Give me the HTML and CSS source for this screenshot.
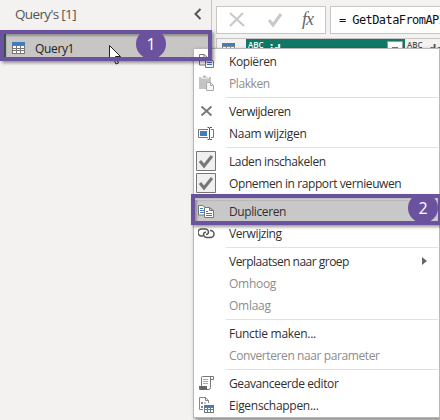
FILE: index.html
```html
<!DOCTYPE html>
<html lang="nl">
<head>
<meta charset="utf-8">
<title>Query's</title>
<link rel="stylesheet" href="styles.css">
</head>
<body>
<div class="app">
  <aside class="pane">
    <header class="pane-head"><span>Query's [1]</span>
      <svg class="chevron" width="8" height="12" viewBox="0 0 8 12"><path d="M6.5 1L1.5 6l5 5"/></svg>
    </header>
    <div class="query">
      <svg width="13" height="12" viewBox="0 0 13 12"><path fill="#777" d="M0 0h13v12H0z"/><path fill="#3f7dbd" d="M0 0h13v3H0z"/><path fill="#fff" d="M1 4h3v2H1zM5 4h3v2H5zM9 4h3v2H9zM1 7h3v1H1zM5 7h3v1H5zM9 7h3v1H9zM1 9h3v2H1zM5 9h3v2H5zM9 9h3v2H9z"/></svg>
      <span>Query1</span>
    </div>
  </aside>
  <main class="work">
    <div class="formula">
      <div class="tools">
        <svg width="108" height="26" viewBox="0 0 108 26" fill="none"><path d="M13 6l14 13M26 6L13 19" stroke="#c8c8c8" stroke-width="2"/><path d="M52 13l4 5 8-11" stroke="#c8c8c8" stroke-width="3"/></svg>
        <i class="fx">fx</i>
      </div>
      <div class="code">= GetDataFromAPI</div>
    </div>
    <div class="grid">
      <div class="corner"><svg width="13" height="12" viewBox="0 0 13 12"><path fill="#888" d="M0 0h13v12H0z"/><path fill="#3f7dbd" d="M0 0h13v3H0z"/><path fill="#fff" d="M1 4h3v3H1zM5 4h3v3H5zM9 4h3v3H9z"/></svg></div>
      <div class="col active"><small>ABC</small><b>id</b><span class="drop"></span></div>
      <div class="col"><small>ABC</small><b>da</b></div>
    </div>
  </main>
</div>

<nav class="menu">
  <div class="item"><svg viewBox="0 0 18 18" class="ico"><path d="M8 13H1.500V2.500H6L9.500 5.500V7M6 2.500V5.500H9" stroke="#777"/><path d="M7.500 6.500h5l3 3v6h-8z" fill="#fff" stroke="#777"/><path d="M9 10.500h5M9 12.500h5" stroke="#3f7dbd"/></svg><span>Kopiëren</span></div>
  <div class="item off"><svg viewBox="0 0 18 18" class="ico"><path d="M1 3h12v5H8v7H1z" fill="#c4c4c4"/><path d="M3.500 4V2.500H5V1h3v1.500h2.500V4z" fill="#aaa" stroke="#fff"/><path d="M8.500 8.500h4l3 3v5h-7zM12.500 8.500v3h3" fill="#f5f5f5" stroke="#aaa"/></svg><span>Plakken</span></div>
  <hr>
  <div class="item"><svg viewBox="0 0 18 18" class="ico"><path d="M3.500 4.500l10 9M13.500 4.500l-10 9" stroke="#777" stroke-width="1.800"/></svg><span class="tight">Verwijderen</span></div>
  <div class="item"><svg viewBox="0 0 18 18" class="ico"><path d="M10 5.500H.500v8H10M13 5.500h2.500v8H13" stroke="#777"/><path d="M2 7h7v5H2z" fill="#3f7dbd"/><path d="M9.500 3.500H11l.500 1 .500-1h2M11.500 4v11M9.500 15.500H11l.500-1 .500 1h2" stroke="#555"/></svg><span class="loose">Naam wijzigen</span></div>
  <hr>
  <div class="item"><svg viewBox="0 0 20 20" class="check"><path d="M.500.500h19v19H.500z" fill="#f0f0f0" stroke="#777"/><path d="M4 10l4 5 8-10" stroke="#777" stroke-width="3"/></svg><span>Laden inschakelen</span></div>
  <div class="item"><svg viewBox="0 0 20 20" class="check"><path d="M.500.500h19v19H.500z" fill="#f0f0f0" stroke="#777"/><path d="M4 10l4 5 8-10" stroke="#777" stroke-width="3"/></svg><span>Opnemen in rapport vernieuwen</span></div>
  <hr>
  <div class="item hot"><svg viewBox="0 0 18 18" class="ico"><path d="M.500 3.500h4l3 2v7.500h-7z" fill="#fff" stroke="#777"/><path d="M2 6.500h3M2 8.500h4M2 10.500h4" stroke="#3f7dbd"/><path d="M6.500 5.500h5l4 3v7h-9zM11.500 5.500v3h4" fill="#fff" stroke="#777"/><path d="M8 9.500h2M8 11.500h6M8 13.500h6" stroke="#3f7dbd"/></svg><span>Dupliceren</span></div>
  <div class="item"><svg viewBox="0 0 18 18" class="ico"><path d="M5 12H3.500a3 3 0 010-7H7a3 3 0 013 4.500 3 3 0 01-2 1M12 6.500h.500a3 3 0 010 7H9a3 3 0 01-3-4.500 3 3 0 012-1" stroke="#555" stroke-width="1.500"/></svg><span>Verwijzing</span></div>
  <hr>
  <div class="item"><span class="tight">Verplaatsen naar groep</span><svg class="arrow" viewBox="0 0 5 8"><path d="M0 0l5 4-5 4z" fill="#666"/></svg></div>
  <div class="item off"><span class="loose">Omhoog</span></div>
  <div class="item off"><span class="loose">Omlaag</span></div>
  <hr>
  <div class="item"><span class="loose">Functie maken...</span></div>
  <div class="item off"><span>Converteren naar parameter</span></div>
  <hr>
  <div class="item"><svg viewBox="0 0 18 18" class="ico"><path d="M3.500 12V3.500q0-1 1-1H15.500V5.500H13M12.500 3v10.500q0 2-2 2H9" stroke="#777"/><path d="M1 12h8v3.500h2V16H2q-1 0-1-2z" fill="#666"/><path d="M5 5.500h5M5 7.500h5M5 9.500h5" stroke="#aaa"/></svg><span>Geavanceerde editor</span></div>
  <div class="item"><svg viewBox="0 0 18 18" class="ico"><path d="M5 13.500H1.500v-12h6l3 3V7M7.500 1.500v3h3" stroke="#888"/><path d="M3 6h2v2H3zM3 10h2v2H3zM6 6.500h2v1H6z" fill="#888"/><path d="M6 9h10v8H6z" fill="#777"/><path d="M6 9h10v2H6z" fill="#3f7dbd"/><path d="M7 12h2v1H7zM10 12h2v1h-2zM13 12h2v1h-2zM7 14h2v2H7zM10 14h2v2h-2zM13 14h2v2h-2z" fill="#fff"/></svg><span class="loose">Eigenschappen...</span></div>
</nav>

<svg class="pointer" width="16" height="21" viewBox="0 0 16 21"><path d="M.500.500v15l3.500-3.500 3 7 2.500-1-3-6.500h5z" fill="#fff" stroke="#222"/></svg>
<div class="mark first"><span class="badge">1</span></div>
<div class="mark second"><span class="badge">2</span></div>
</body>
</html>
```
FILE: styles.css
```css
* { box-sizing: border-box; }
body { margin: 0; width: 440px; height: 420px; overflow: hidden; position: relative; background: #f3f2f1; font: 12px/22px "Open Sans", "Noto Sans", sans-serif; color: #333; }
svg { display: block; flex: none; fill: none; }
.app { display: flex; height: 420px; }
.pane { width: 212px; flex: none; border-right: 1px solid #c8c6c4; padding-top: 3px; }
.pane-head { display: flex; justify-content: space-between; height: 31px; padding: 0 9px 0 15px; font-size: 13.5px; letter-spacing: -.65px; line-height: 23px; color: #555; }
.chevron { margin-top: 5px; stroke: #555; stroke-width: 2; }
.query { display: flex; align-items: center; gap: 10px; height: 24px; margin: 0 3px 0 4px; padding: 4px 0 0 6px; border-left: 2px solid #4b6b5c; background: #c8c6c4; color: #222; }
.query span { letter-spacing: -.35px; padding-top: 2px; }
.work { flex: 1; min-width: 0; padding: 6px 0 0 4px; overflow: hidden; }
.formula { display: flex; gap: 4px; height: 28px; }
.tools, .code { flex: none; border: 1px solid #c8c6c4; background: #fff; }
.tools { width: 110px; display: flex; }
.fx { margin-left: -23px; font: italic 18px/25px "Liberation Serif", serif; color: #666; letter-spacing: -1px; }
.code { width: 150px; padding-left: 8px; font: 12px/27px "DejaVu Sans Mono", monospace; letter-spacing: -.58px; color: #111; white-space: nowrap; }
.grid { display: flex; height: 378px; margin-top: 4px; border: 1px solid #c8c6c4; background: #a8a8a8; }
.corner { flex: none; width: 29px; padding: 4px 5px; background: #f3f2f1; height: 24px; }
.col { width: 160px; flex: none; display: flex; gap: 6px; height: 24px; padding: 1px 2px; background: #f3f2f1; line-height: 10px; color: #555; }
.col small { font-size: 8px; font-weight: 600; line-height: 9px; }
.col b { margin-top: 5px; }
.active { width: 159px; background: #117865; color: #fff; }
.drop { width: 16px; height: 16px; margin: 1px 0 0 auto; border: 1px solid #999; background: linear-gradient(#777, #777) 50% 5px / 6px 1px no-repeat #fff; }
.menu { position: absolute; left: 193px; top: 48px; width: 247px; height: 370px; padding-top: 1px; border: 1px solid #b8b8b8; background: #fff; box-shadow: 2px 2px 4px #0007; }
.item { display: flex; align-items: center; height: 22px; position: relative; padding-left: 35px; white-space: nowrap; color: #303030; }
.item span { padding-top: 2px; letter-spacing: -.4px; }
.item .tight { letter-spacing: -.51px; }
.item .loose { letter-spacing: -.28px; }
.off { color: #8d8d8d; }
.hot { background: #c8c8c8; }
.menu hr { height: 1px; margin: 3px 1px 2px 32px; border: 0; background: #e1e1e1; }
.ico { position: absolute; left: 4px; top: 2px; width: 18px; height: 18px; }
.check { position: absolute; left: 2px; top: 1px; width: 20px; height: 20px; }
.arrow { width: 5px; height: 8px; margin: 0 12px 0 auto; }
.pointer { position: absolute; left: 109px; top: 45px; }
.mark { position: absolute; height: 31px; border: 4px solid #6b529f; box-shadow: 2px 2px 3px #0006, inset 2px 2px 2px #0004; overflow: hidden; }
.first { left: 0; top: 30px; width: 212px; }
.second { left: 191px; top: 194px; width: 251px; }
.badge { position: absolute; top: -5px; width: 30px; height: 30px; border-radius: 50%; background: #6b529f; color: #fff; font-size: 16px; line-height: 30px; text-align: center; }
.first .badge { left: 132px; }
.second .badge { left: 213px; }
```
